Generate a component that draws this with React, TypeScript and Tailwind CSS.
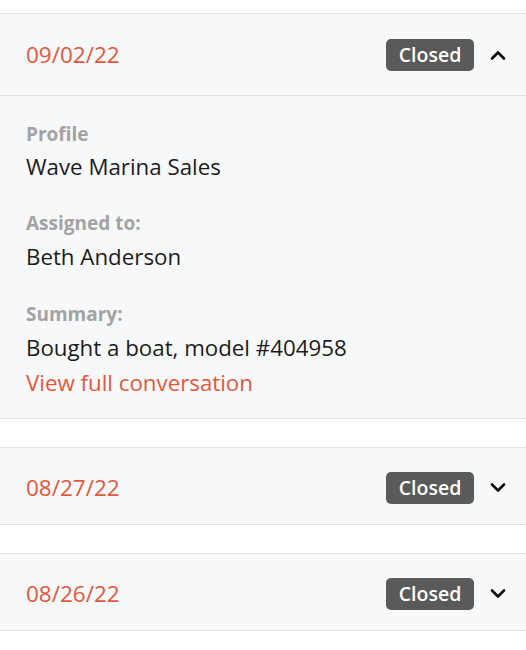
import React from "react";

const ORANGE = "text-[#e4573b]";

function Chevron({ up }: { up?: boolean }) {
  return (
    <svg width="16" height="10" viewBox="0 0 16 10" fill="none" className="shrink-0">
      <path
        d={up ? "M2 8.5 L8 2.5 L14 8.5" : "M2 1.5 L8 7.5 L14 1.5"}
        stroke="#111"
        strokeWidth="2.6"
        strokeLinecap="round"
        strokeLinejoin="round"
      />
    </svg>
  );
}

function Badge() {
  return (
    <span className="flex h-[32px] w-[88px] items-center justify-center rounded-[5px] bg-[#5a5a5a] text-[19.5px] font-semibold text-white">
      Closed
    </span>
  );
}

function Header({ date, up, h }: { date: string; up?: boolean; h: string }) {
  return (
    <div className={`flex items-center justify-between pl-[26px] pr-[20px] ${h}`}>
      <span className={`text-[22.5px] ${ORANGE}`}>{date}</span>
      <div className="flex items-center gap-[16px]">
        <Badge />
        <Chevron up={up} />
      </div>
    </div>
  );
}

export default function App() {
  return (
    <div
      className="min-h-[650px] bg-white pt-[13px] text-[#1c1c1c]"
      style={{ fontFamily: '"Open Sans", "Noto Sans", sans-serif' }}
    >
      <div className="border-y border-[#e2e2e2] bg-[#f7f8fa]">
        <Header date="09/02/22" up h="h-[81px]" />
        <div className="border-t border-[#e2e2e2] px-[26px] pb-[20px] pt-[26px]">
          <div className="text-[19px] font-bold leading-[24px] text-[#a3a3a3]">Profile</div>
          <div className="mt-[6px] text-[22.3px] leading-[30px]">Wave Marina Sales</div>
          <div className="mt-[29px] text-[19px] font-bold leading-[24px] text-[#a3a3a3]">Assigned to:</div>
          <div className="mt-[7px] text-[22.3px] leading-[30px]">Beth Anderson</div>
          <div className="mt-[30px] text-[19px] font-bold leading-[24px] text-[#a3a3a3]">Summary:</div>
          <div className="mt-[7px] text-[22.3px] leading-[30px]">Bought a boat, model #404958</div>
          <div className={`mt-[5px] text-[22.3px] leading-[30px] ${ORANGE}`}>View full conversation</div>
        </div>
      </div>
      <div className="mt-[28px] border-y border-[#e2e2e2] bg-[#f7f8fa]">
        <Header date="08/27/22" h="h-[76px] pt-[3px]" />
      </div>
      <div className="mt-[28px] border-y border-[#e2e2e2] bg-[#f7f8fa]">
        <Header date="08/26/22" h="h-[76px] pt-[4px]" />
      </div>
    </div>
  );
}
